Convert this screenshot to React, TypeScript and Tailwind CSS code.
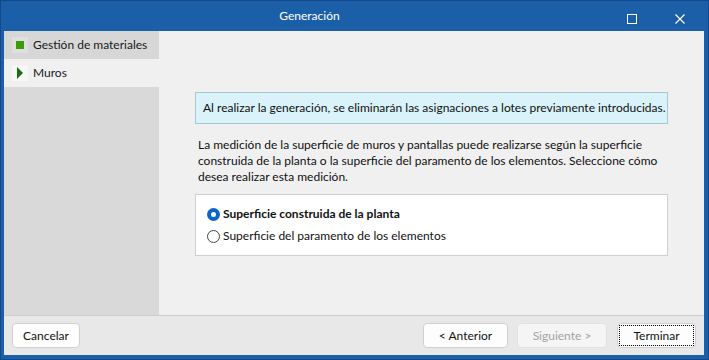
import React from "react";

const font = { fontFamily: '"Segoe UI", Lato, "Noto Sans", sans-serif' };

export default function App() {
  return (
    <div className="w-[709px] h-[360px] bg-[#1b5fa9] flex flex-col border border-[#13498a] text-[12px] text-[#1a1a1a]" style={font}>
      {/* title bar */}
      <div className="h-[30px] flex items-center relative shrink-0">
        <div className="flex-1 text-center text-white text-[12px] pr-[90px]">Generación</div>
        <div className="absolute right-[71px] top-[13px] w-[10px] h-[10px] border border-white" />
        <svg className="absolute right-[23px] top-[13px]" width="10" height="10" viewBox="0 0 10 10">
          <path d="M0.5 0.5 L9.5 9.5 M9.5 0.5 L0.5 9.5" stroke="white" strokeWidth="1.2" />
        </svg>
      </div>
      {/* body */}
      <div className="flex-1 flex flex-col mx-[3px] mb-[4px] mr-[4px] bg-[#f0f0f0]">
        <div className="flex flex-1">
          {/* sidebar */}
          <div className="w-[155px] bg-[#d9d9d9] flex flex-col">
            <div className="h-[28px] flex items-center pl-[8px] gap-[5px] bg-[#d7d7d7]">
              <div className="w-[16px] h-[16px] bg-[#dfdfdf] flex items-center justify-center">
                <div className="w-[8px] h-[8px] bg-[#3a9c0a]" />
              </div>
              <span>Gestión de materiales</span>
            </div>
            <div className="h-[28px] flex items-center pl-[8px] gap-[5px] bg-[#f0f0f0]">
              <div className="w-[16px] h-[16px] bg-[#f7f7f7] flex items-center justify-center">
                <svg width="8" height="12" viewBox="0 0 8 12">
                  <path d="M1 0 L7 6 L1 12 Z" fill="#1a6b12" />
                </svg>
              </div>
              <span>Muros</span>
            </div>
          </div>
          {/* content */}
          <div className="flex-1 pl-[36px] pr-[36px] pt-[61px]">
            <div className="h-[32px] bg-[#daf2f9] border border-[#a6c8d1] flex items-center pl-[7px] text-[#111]">
              Al realizar la generación, se eliminarán las asignaciones a lotes previamente introducidas.
            </div>
            <p className="mt-[13px] pl-[3px] leading-[16px] text-[#111]">
              La medición de la superficie de muros y pantallas puede realizarse según la superficie construida de la planta o la superficie del paramento de los elementos. Seleccione cómo desea realizar esta medición.
            </p>
            <div className="mt-[9px] h-[62px] bg-white border border-[#cfcfcf] pl-[11px] pt-[10px] flex flex-col gap-[4px]">
              <label className="flex items-center gap-[3px] font-bold text-[#111]">
                <span className="w-[13px] h-[13px] rounded-full bg-[#0a66c2] flex items-center justify-center">
                  <span className="w-[5px] h-[5px] rounded-full bg-white" />
                </span>
                Superficie construida de la planta
              </label>
              <label className="flex items-center gap-[3px] text-[#111]">
                <span className="w-[13px] h-[13px] rounded-full border border-[#444] bg-white" />
                Superficie del paramento de los elementos
              </label>
            </div>
          </div>
        </div>
        {/* footer */}
        <div className="h-[40px] border-t border-[#cdcdcd] bg-[#e8e8e8] flex items-center px-[8px] shrink-0">
          <button className="w-[68px] h-[25px] bg-[#fdfdfd] border border-[#d0d0d0] rounded-[4px] text-[#111]">Cancelar</button>
          <div className="flex-1" />
          <button className="w-[85px] h-[25px] bg-[#fdfdfd] border border-[#d0d0d0] rounded-[4px] text-[#111]">&lt; Anterior</button>
          <button className="ml-[9px] w-[90px] h-[25px] bg-[#f5f5f5] border border-[#e2e2e2] rounded-[4px] text-[#a3a3a3]">Siguiente &gt;</button>
          <button className="ml-[10px] w-[79px] h-[25px] bg-[#fdfdfd] border border-[#d0d0d0] rounded-[4px] text-[#111] p-[1px]">
            <span className="block w-full h-full border border-dotted border-black leading-[19px]">Terminar</span>
          </button>
        </div>
      </div>
    </div>
  );
}
